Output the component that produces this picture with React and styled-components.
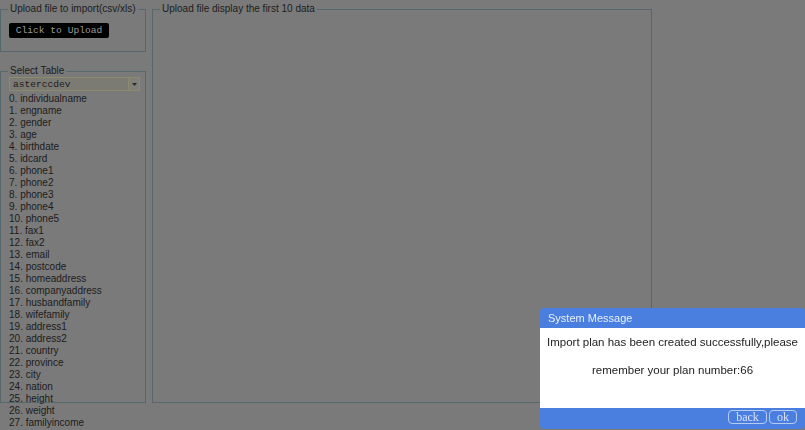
import React from "react";
import styled, { createGlobalStyle } from "styled-components";

const Global = createGlobalStyle`
  html, body { margin: 0; padding: 0; background: #7a7a7a; }
  body { font-family: "Liberation Sans", Arial, sans-serif; color: #1c1c1c; overflow: hidden; }
  #root { width: 805px; height: 430px; }
`;

const Page = styled.div`
  display: flex;
  align-items: flex-start;
  gap: 6px;
  padding-top: 3px;
  width: 805px;
  height: 430px;
  box-sizing: border-box;
`;

const LeftCol = styled.div`
  display: flex;
  flex-direction: column;
  width: 146px;
  gap: 13px;
`;

const Fieldset = styled.fieldset`
  margin: 0;
  padding: 0 7px 0 7px;
  border: 1px solid #56686c;
  box-sizing: border-box;
  height: ${(p) => p.$h}px;
  width: ${(p) => p.$w}px;
  min-width: 0;
`;

const Legend = styled.legend`
  font-size: 10px;
  line-height: 12px;
  padding: 0 2px;
  color: #1c1c1c;
`;

const UploadButton = styled.button`
  display: block;
  margin: 8px 0 0 1px;
  width: 100px;
  height: 15px;
  padding: 0;
  border: none;
  border-radius: 2px;
  background: #000;
  color: #9a9a9a;
  font-family: "Liberation Mono", "Courier New", monospace;
  font-size: 9.6px;
  line-height: 15px;
  text-align: center;
`;

const SelectBox = styled.div`
  margin: 0 0 0 1px;
  height: 14px;
  width: 131px;
  box-sizing: border-box;
  border: 1px solid #8c896e;
  background: #7b7b74;
  display: flex;
  align-items: center;
  justify-content: space-between;
  padding-left: 3px;
  font-family: "Liberation Mono", "Courier New", monospace;
  font-size: 9.6px;
  color: #1c1c1c;
`;

const Arrow = styled.span`
  width: 11px;
  height: 12px;
  box-sizing: border-box;
  border-left: 1px solid #8c896e;
  background: #807f78;
  display: flex;
  align-items: center;
  justify-content: center;
`;

const List = styled.ol`
  list-style: none;
  margin: 2px 0 0 0;
  padding: 0 0 0 1px;
`;

const Item = styled.li`
  font-size: 10px;
  line-height: 12px;
  height: 12px;
  white-space: nowrap;
`;

const Dialog = styled.div`
  position: fixed;
  left: 540px;
  top: 308px;
  width: 265px;
  height: 121px;
  border-radius: 4px;
  overflow: hidden;
  background: #4a7fdf;
  display: flex;
  flex-direction: column;
  font-family: "Liberation Sans", Arial, sans-serif;
`;

const DialogTitle = styled.div`
  height: 20px;
  line-height: 20px;
  padding-left: 8px;
  color: #e9eefb;
  font-size: 11px;
`;

const DialogBody = styled.div`
  height: 80px;
  background: #fff;
  color: #222;
  font-size: 11.5px;
  line-height: 28px;
  text-align: center;
  padding: 0 3px;
`;

const DialogFooter = styled.div`
  flex: 1;
  display: flex;
  justify-content: flex-end;
  align-items: flex-start;
  padding: 2px 8px 0 0;
  gap: 2px;
`;

const FooterButton = styled.button`
  height: 14px;
  width: ${(p) => p.$w}px;
  padding: 0;
  border: 1px solid #b7cbf2;
  border-radius: 4px;
  background: transparent;
  color: #d7e1f7;
  font-family: "Liberation Serif", "Times New Roman", serif;
  font-size: 12px;
  line-height: 12px;
`;

const fields = [
  "individualname", "engname", "gender", "age", "birthdate", "idcard",
  "phone1", "phone2", "phone3", "phone4", "phone5", "fax1", "fax2", "email",
  "postcode", "homeaddress", "companyaddress", "husbandfamily", "wifefamily",
  "address1", "address2", "country", "province", "city", "nation", "height",
  "weight", "familyincome",
];

export default function App() {
  return (
    <>
      <Global />
      <Page>
        <LeftCol>
          <Fieldset $h={49} $w={146}>
            <Legend>Upload file to import(csv/xls)</Legend>
            <UploadButton>Click to Upload</UploadButton>
          </Fieldset>
          <Fieldset $h={338} $w={146}>
            <Legend>Select Table</Legend>
            <SelectBox>
              <span>asterccdev</span>
              <Arrow>
                <svg width="5" height="3" viewBox="0 0 5 3">
                  <path d="M0 0 L5 0 L2.5 3 Z" fill="#2a2a2a" />
                </svg>
              </Arrow>
            </SelectBox>
            <List>
              {fields.map((f, i) => (
                <Item key={f}>
                  {i}. {f}
                </Item>
              ))}
            </List>
          </Fieldset>
        </LeftCol>
        <Fieldset $h={400} $w={500}>
          <Legend>Upload file display the first 10 data</Legend>
        </Fieldset>
      </Page>
      <Dialog>
        <DialogTitle>System Message</DialogTitle>
        <DialogBody>
          Import plan has been created successfully,please remember your plan number:66
        </DialogBody>
        <DialogFooter>
          <FooterButton $w={39}>back</FooterButton>
          <FooterButton $w={28}>ok</FooterButton>
        </DialogFooter>
      </Dialog>
    </>
  );
}
